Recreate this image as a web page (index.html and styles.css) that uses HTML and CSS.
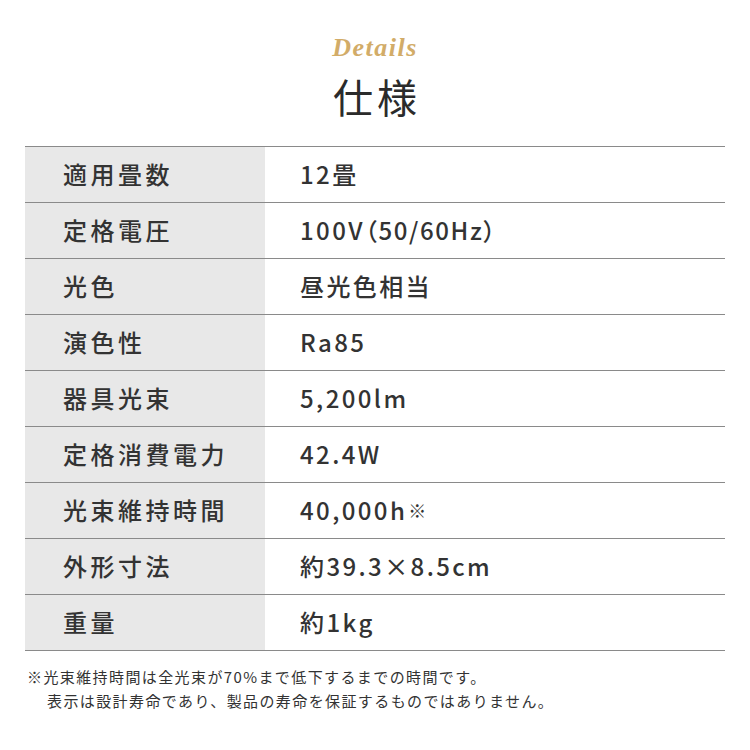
FILE: index.html
```html
<!DOCTYPE html>
<html lang="ja">
<head>
<meta charset="utf-8">
<title>仕様</title>
<link rel="stylesheet" href="styles.css">
</head>
<body>
<div class="page">
  <header class="head">
    <div class="script">Details</div>
    <h1 class="title">仕様</h1>
  </header>
  <div class="spec">
    <div class="row"><div class="label">適用畳数</div><div class="value">12畳</div></div>
    <div class="row"><div class="label">定格電圧</div><div class="value">100V<span class="paren">（50/60Hz）</span></div></div>
    <div class="row"><div class="label">光色</div><div class="value">昼光色相当</div></div>
    <div class="row"><div class="label">演色性</div><div class="value">Ra85</div></div>
    <div class="row"><div class="label">器具光束</div><div class="value">5,200lm</div></div>
    <div class="row"><div class="label">定格消費電力</div><div class="value">42.4W</div></div>
    <div class="row"><div class="label">光束維持時間</div><div class="value">40,000h<span class="mark">※</span></div></div>
    <div class="row"><div class="label">外形寸法</div><div class="value">約39.3×8.5cm</div></div>
    <div class="row"><div class="label">重量</div><div class="value">約1kg</div></div>
  </div>
  <div class="notes">
    <p class="note">※光束維持時間は全光束が70%まで低下するまでの時間です。</p>
    <p class="note indent">表示は設計寿命であり、製品の寿命を保証するものではありません。</p>
  </div>
</div>
</body>
</html>
```
FILE: styles.css
```css
html, body {
  margin: 0;
  padding: 0;
  background: #ffffff;
}
.page {
  width: 750px;
  height: 750px;
  font-family: "Noto Sans CJK JP", "Noto Sans", sans-serif;
  color: #333333;
  box-sizing: border-box;
  padding-top: 33px;
}
.head {
  display: flex;
  flex-direction: column;
  align-items: center;
}
.script {
  font-family: "Liberation Serif", "DejaVu Serif", serif;
  font-style: italic;
  font-weight: bold;
  font-size: 26px;
  line-height: 30px;
  color: #d2ac68;
  letter-spacing: 1.5px;
}
.title {
  margin: 9px 0 0 0;
  font-size: 40px;
  font-weight: 400;
  line-height: 48px;
  letter-spacing: 4px;
  color: #2b2b2b;
  padding-left: 4px;
}
.spec {
  margin: 26px 25px 0 25px;
  border-bottom: 1px solid #8a8a8a;
}
.row {
  display: flex;
  height: 55px;
  border-top: 1px solid #8a8a8a;
}
.label {
  width: 240px;
  background: #e8e8e8;
  box-sizing: border-box;
  padding-left: 38px;
  padding-bottom: 2px;
  display: flex;
  align-items: center;
  font-size: 24px;
  font-weight: 500;
  letter-spacing: 3.5px;
}
.value {
  flex: 1;
  box-sizing: border-box;
  padding-left: 35px;
  padding-bottom: 2px;
  display: flex;
  align-items: center;
  font-size: 24px;
  font-weight: 500;
  letter-spacing: 2.4px;
}
.paren {
  font-feature-settings: "palt" 1;
  letter-spacing: 1.6px;
}
.mark {
  font-size: 18px;
  margin-left: 1px;
}
.notes {
  margin-top: 14px;
  padding-left: 27px;
}
.note {
  margin: 0;
  font-size: 15px;
  line-height: 24px;
  letter-spacing: 1.4px;
}
.indent {
  padding-left: 20px;
}
```
